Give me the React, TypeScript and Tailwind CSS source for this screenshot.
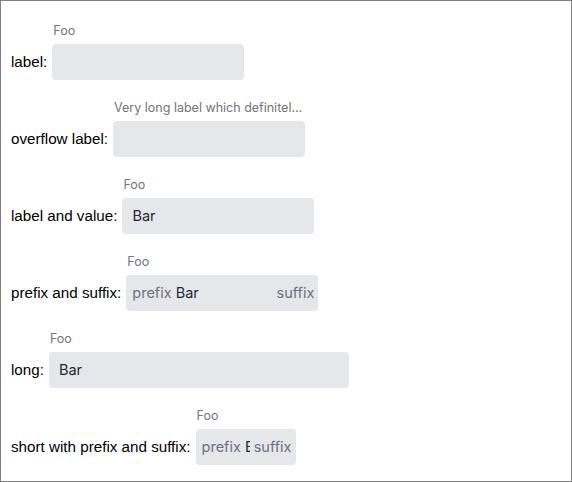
import React from 'react';

interface Field {
  label: string;
  floating: string;
  value?: string;
  prefix?: string;
  suffix?: string;
  width: 'normal' | 'long' | 'short';
}

const fields: Field[] = [
  { label: 'label:', floating: 'Foo', width: 'normal' },
  {
    label: 'overflow label:',
    floating: 'Very long label which definitely does not fit into the field',
    width: 'normal',
  },
  { label: 'label and value:', floating: 'Foo', value: 'Bar', width: 'normal' },
  { label: 'prefix and suffix:', floating: 'Foo', value: 'Bar', prefix: 'prefix', suffix: 'suffix', width: 'normal' },
  { label: 'long:', floating: 'Foo', value: 'Bar', width: 'long' },
  {
    label: 'short with prefix and suffix:',
    floating: 'Foo',
    value: 'Bar',
    prefix: 'prefix',
    suffix: 'suffix',
    width: 'short',
  },
];

const widthClass = {
  normal: 'w-[192px]',
  long: 'w-[300px]',
  short: 'w-[100px]',
};

const TextField: React.FC<{ f: Field }> = ({ f }) => (
  <div className={`${widthClass[f.width]} shrink-0`}>
    <div className="h-4 mb-[5px] pl-px truncate text-[12.5px] leading-4 text-[#70747c] font-['Inter',sans-serif]">
      {f.floating}
    </div>
    <div className="h-9 rounded bg-gray-200 flex items-center overflow-hidden font-['Inter',sans-serif] text-[14.5px]">
      {f.prefix && <span className="pl-[6px] text-gray-500 shrink-0">{f.prefix}</span>}
      <span className={`flex-1 min-w-0 overflow-hidden whitespace-nowrap text-gray-800 ${f.prefix ? 'pl-[4px]' : 'pl-[10px]'}`}>
        {f.value}
      </span>
      {f.suffix && <span className="pl-[4px] pr-[4px] text-gray-500 shrink-0">{f.suffix}</span>}
    </div>
  </div>
);

export default function App() {
  return (
    <div className="w-[572px] h-[482px] border border-[#808080] bg-white px-[10px] pt-[22px] font-['Liberation_Sans',Arial,sans-serif] text-[15.2px] text-black">
      <div className="flex flex-col gap-5">
        {fields.map((f) => (
          <div key={f.label} className="flex items-end">
            <span className="h-9 flex items-center pr-[5px] whitespace-nowrap">{f.label}</span>
            <TextField f={f} />
          </div>
        ))}
      </div>
    </div>
  );
}
